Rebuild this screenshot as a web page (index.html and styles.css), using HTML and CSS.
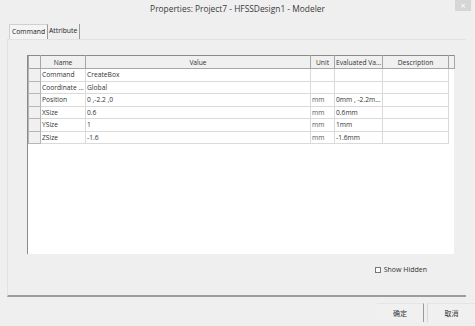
FILE: index.html
```html
<!DOCTYPE html>
<html lang="en">
<head>
  <meta charset="UTF-8" />
  <title>Properties: Project7 - HFSSDesign1 - Modeler</title>
  <link rel="stylesheet" href="styles.css">
</head>
<body>
  <div class="window">
    <div class="titlebar">
      <span class="title">Properties: Project7 - HFSSDesign1 - Modeler</span>
      <div class="close">&times;</div>
    </div>
    <div class="tabs">
      <div class="tab active">Command</div>
      <div class="tab">Attribute</div>
    </div>
    <div class="panel">
      <div class="grid">
        <table>
          <colgroup>
            <col class="c-hdr"><col class="c-name"><col class="c-value"><col class="c-unit"><col class="c-eval"><col class="c-desc"><col>
          </colgroup>
          <thead>
            <tr>
              <th></th><th>Name</th><th>Value</th><th>Unit</th><th>Evaluated Va...</th><th>Description</th><th></th>
            </tr>
          </thead>
          <tbody>
            <tr><td class="rh"></td><td>Command</td><td>CreateBox</td><td></td><td></td><td></td><td class="empty"></td></tr>
            <tr><td class="rh"></td><td>Coordinate ...</td><td>Global</td><td></td><td></td><td></td><td class="empty"></td></tr>
            <tr><td class="rh"></td><td>Position</td><td>0 ,-2.2 ,0</td><td class="unit">mm</td><td>0mm , -2.2m...</td><td></td><td class="empty"></td></tr>
            <tr><td class="rh"></td><td>XSize</td><td>0.6</td><td class="unit">mm</td><td>0.6mm</td><td></td><td class="empty"></td></tr>
            <tr><td class="rh"></td><td>YSize</td><td>1</td><td class="unit">mm</td><td>1mm</td><td></td><td class="empty"></td></tr>
            <tr><td class="rh"></td><td>ZSize</td><td>-1.6</td><td class="unit">mm</td><td>-1.6mm</td><td></td><td class="empty"></td></tr>
          </tbody>
        </table>
      </div>
      <div class="options">
        <label class="check"><span class="box"></span>Show Hidden</label>
      </div>
    </div>
    <div class="buttons">
      <button class="btn">确定</button>
      <button class="btn">取消</button>
    </div>
  </div>
</body>
</html>
```

FILE: styles.css
```css
* {
  margin: 0;
  padding: 0;
  box-sizing: border-box;
}
body {
  font-family: 'Open Sans', 'Noto Sans CJK SC', sans-serif;
  background: #efefef;
  color: #333;
}
.window {
  width: 475px;
  height: 326px;
  background: #efefef;
  position: relative;
  overflow: hidden;
}
.titlebar {
  height: 17px;
  display: flex;
  align-items: center;
  justify-content: center;
}
.title {
  font-size: 8.4px;
  color: #3a3a3a;
}
.close {
  position: absolute;
  top: 0;
  right: 4px;
  width: 16px;
  height: 11px;
  background: #d6d6d6;
  color: #fff;
  font-size: 9px;
  line-height: 11px;
  text-align: center;
}
.tabs {
  display: flex;
  align-items: flex-end;
  height: 22px;
  padding-left: 9px;
}
.tab {
  font-size: 6.8px;
  height: 15px;
  line-height: 14px;
  padding: 0 2px 0 1px;
  color: #222;
  border-right: 1px solid #9a9a9a;
}
.tab.active {
  background: #f4f4f4;
  padding: 0 2px;
  border: 1px solid #d0d0d0;
  border-bottom: none;
  border-right: 1px solid #9a9a9a;
}
.panel {
  margin: 0 9px 0 7px;
  height: 258px;
  border-top: 1px solid #e2e2e2;
  border-left: 1px solid #e2e2e2;
  border-bottom: 2px solid #9c9c9c;
  padding: 15px 0 0 19px;
}
.grid {
  width: 427px;
  height: 199px;
  background: #fff;
  border-left: 1px solid #8a8a8a;
}
.grid table {
  border-collapse: collapse;
  table-layout: fixed;
  width: 427px;
  font-size: 6.7px;
}
.c-hdr { width: 12px; }
.c-name { width: 45px; }
.c-value { width: 225px; }
.c-unit { width: 24px; }
.c-eval { width: 48px; }
.c-desc { width: 66px; }
thead th {
  height: 13px;
  font-weight: normal;
  background: #f0f0f0;
  border: 1px solid #a6a6a6;
  border-top: 1px solid #8a8a8a;
  color: #333;
  white-space: nowrap;
  overflow: hidden;
  padding: 0 1px;
}
tbody td {
  height: 12.5px;
  border: 1px solid #dadada;
  padding: 0 1px;
  white-space: nowrap;
  overflow: hidden;
  color: #333;
}
tbody td.rh {
  background: #f0f0f0;
  border: 1px solid #b6b6b6;
}
tbody td.unit {
  color: #555;
}
tbody td.empty {
  border: none;
  border-left: 1px solid #dadada;
}
.options {
  display: flex;
  justify-content: flex-end;
  padding: 11px 39px 0 0;
}
.check {
  display: flex;
  align-items: center;
  gap: 3px;
  font-size: 7px;
  color: #333;
}
.box {
  width: 6px;
  height: 6px;
  border: 1px solid #777;
  background: #fff;
}
.buttons {
  display: flex;
  justify-content: flex-end;
  gap: 3px;
  padding-top: 6px;
}
.btn {
  width: 47px;
  height: 19px;
  font-family: 'Noto Sans CJK SC', sans-serif;
  font-size: 7px;
  background: #f0f0f0;
  border: none;
  border-right: 1px solid #9a9a9a;
  border-top: 1px solid #e4e4e4;
  color: #333;
}
.btn:last-child {
  width: 48px;
  border-left: 1px solid #d8d8d8;
  border-right: none;
}
```
